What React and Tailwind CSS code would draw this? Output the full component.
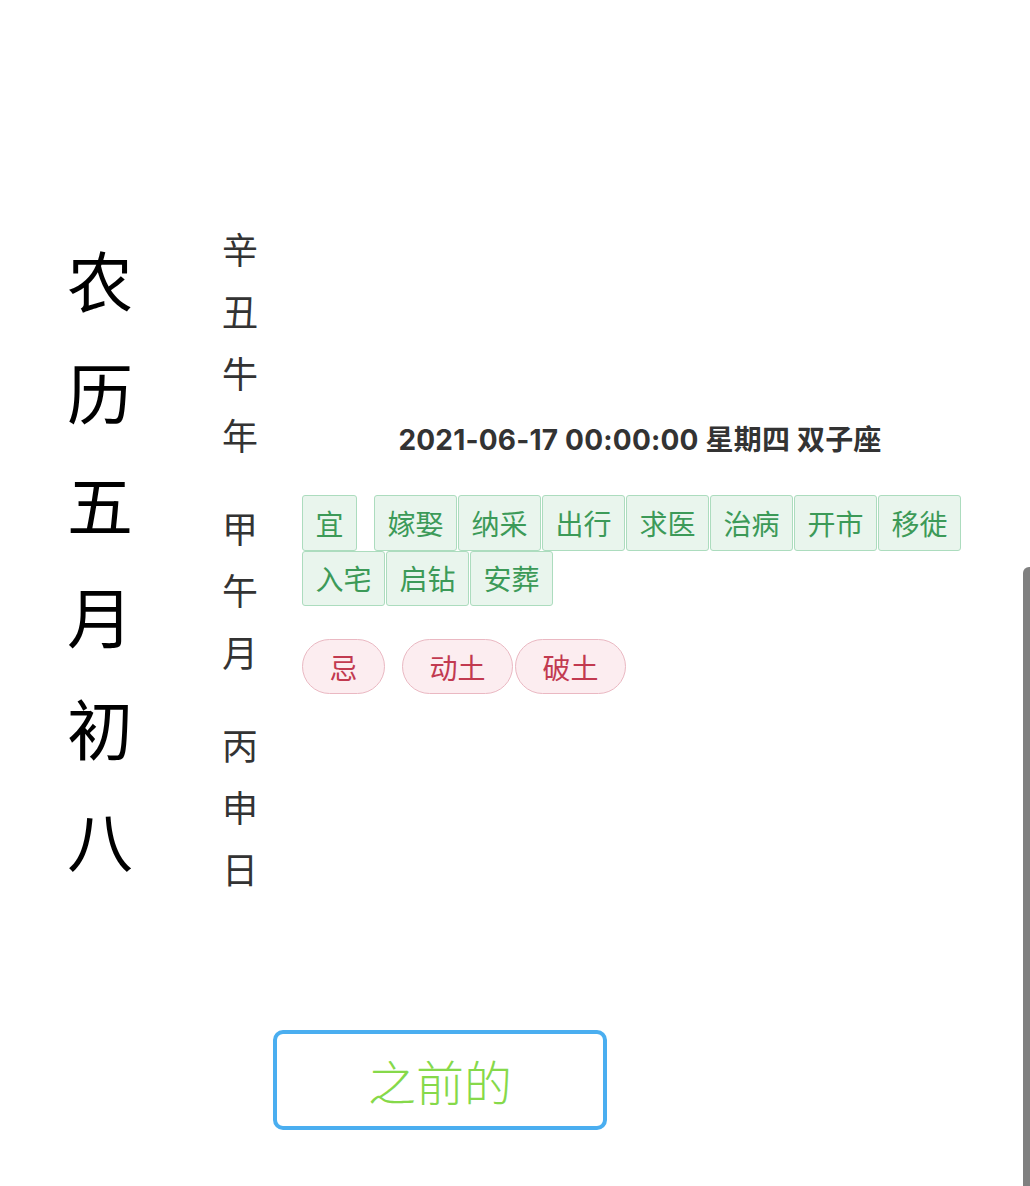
import React from 'react';

const YI = ['嫁娶', '纳采', '出行', '求医', '治病', '开市', '移徙', '入宅', '启钻', '安葬'];
const JI = ['动土', '破土'];

const GANZHI = [
  ['辛', '丑', '牛', '年'],
  ['甲', '午', '月'],
  ['丙', '申', '日'],
];

const font = { fontFamily: '"Noto Sans CJK SC", sans-serif' };

export default function App() {
  return (
    <div
      className="relative w-full h-[1186px] overflow-hidden bg-white"
      style={font}
    >
      <div className="flex items-center pt-[217px]">
        {/* big lunar date */}
        <div className="ml-[66px] w-[68px] flex flex-col items-center text-[66px] leading-[112px] text-black">
          {'农历五月初八'.split('').map((c, i) => (
            <span key={i}>{c}</span>
          ))}
        </div>

        {/* ganzhi column */}
        <div className="ml-[88px] w-[36px] flex flex-col items-center gap-[31px] text-[36px] leading-[62px] text-[#333]">
          {GANZHI.map((g, i) => (
            <div key={i} className="flex flex-col items-center">
              {g.map((c, j) => (
                <span key={j}>{c}</span>
              ))}
            </div>
          ))}
        </div>

        {/* detail */}
        <div className="ml-[44px] w-[676px]">
          <div
            className="text-center text-[28px] leading-[36px] font-bold text-[#333] tracking-[0.2px]"
            style={{ fontFamily: '"Inter", "Noto Sans CJK SC", sans-serif' }}
          >
            2021-06-17 00:00:00 星期四 双子座
          </div>

          <div className="mt-[37px] flex flex-wrap gap-x-px">
            <span className="mr-[16px] h-[55.5px] px-[12.5px] inline-flex items-center text-[28px] text-[#3c9a58] bg-[#e9f5ed] border border-[#acdcbe] rounded-[3px]">
              宜
            </span>
            {YI.map(t => (
              <span
                key={t}
                className="h-[55.5px] px-[12.5px] inline-flex items-center text-[28px] text-[#3c9a58] bg-[#e9f5ed] border border-[#acdcbe] rounded-[3px]"
              >
                {t}
              </span>
            ))}
          </div>

          <div className="mt-[33px] flex gap-[2px]">
            <span className="mr-[15px] h-[55px] px-[26.5px] inline-flex items-center text-[28px] text-[#c23a50] bg-[#fcedf0] border border-[#eab8c2] rounded-full">
              忌
            </span>
            {JI.map(t => (
              <span
                key={t}
                className="h-[55px] px-[26.5px] inline-flex items-center text-[28px] text-[#c23a50] bg-[#fcedf0] border border-[#eab8c2] rounded-full"
              >
                {t}
              </span>
            ))}
          </div>
        </div>
      </div>

      <div className="mt-[131px] ml-[273px]">
        <button className="w-[334px] h-[100px] border-4 border-[#4aaef0] rounded-[10px] bg-white text-[48px] font-light text-[#86d94a] flex items-center justify-center">
          之前的
        </button>
      </div>

      {/* scroll indicator */}
      <div className="absolute right-0 top-[567px] w-[7px] h-[619px] bg-[#808080] rounded-tl-[6px]" />
    </div>
  );
}
